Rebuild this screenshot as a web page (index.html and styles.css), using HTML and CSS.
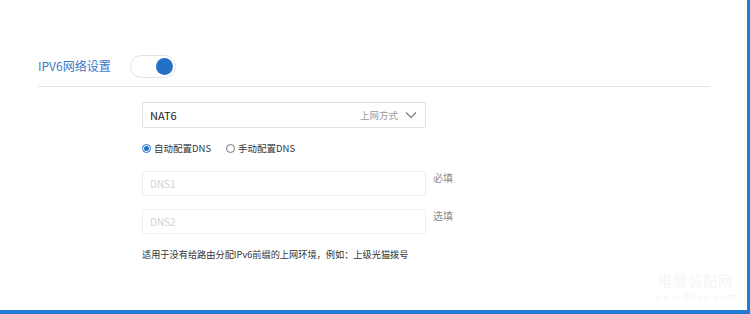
FILE: index.html
```html
<!DOCTYPE html>
<html lang="zh-CN">
<head>
    <meta charset="UTF-8">
    <title>IPV6网络设置</title>
    <link rel="stylesheet" href="styles.css">
</head>
<body>
<div class="frame">
    <div class="page">
        <div class="section">
            <span class="section__title">IPV6网络设置</span>
            <span class="switch switch_on"><span class="switch__knob"></span></span>
        </div>

        <div class="form">
            <div class="select">
                <span class="select__value">NAT6</span>
                <span class="select__label">上网方式</span>
                <svg class="select__arrow" width="12" height="8" viewBox="0 0 12 8">
                    <path d="M1 1.5 L6 6.5 L11 1.5" fill="none" stroke="#777" stroke-width="1.1"/>
                </svg>
            </div>

            <div class="radios">
                <label class="radio"><span class="radio__dot radio__dot_on"></span>自动配置DNS</label>
                <label class="radio"><span class="radio__dot"></span>手动配置DNS</label>
            </div>

            <div class="form__line form__line_first">
                <div class="form__input">DNS1</div>
                <span class="form__hint">必填</span>
            </div>
            <div class="form__line">
                <div class="form__input">DNS2</div>
                <span class="form__hint">选填</span>
            </div>

            <p class="form__note">适用于没有给路由分配IPv6前缀的上网环境，例如：上级光猫拨号</p>
        </div>

        <div class="watermark">
            <div class="watermark__cn">电脑装配网</div>
            <div class="watermark__en">www.dnzp.com</div>
        </div>
    </div>
</div>
</body>
</html>
```

FILE: styles.css
```css
* {
    box-sizing: border-box;
    font-family: "Noto Sans CJK SC", "Noto Sans", sans-serif;
}
html, body {
    margin: 0;
    padding: 0;
    background: #fff;
}
.frame {
    width: 750px;
    height: 314px;
    border-right: 3px solid #1f7ad8;
    border-bottom: 4px solid #1f7ad8;
    overflow: hidden;
}
.page {
    position: relative;
    height: 100%;
    padding-top: 54px;
}
.section {
    display: flex;
    align-items: center;
    margin: 0 37px 0 38px;
    padding-bottom: 8px;
    border-bottom: 1px solid #e4e4e4;
}
.section__title {
    width: 92px;
    color: #3a78c6;
    font-size: 12px;
    line-height: 24px;
}
.switch {
    display: inline-block;
    position: relative;
    width: 46px;
    height: 23px;
    border: 1px solid #e2e2e2;
    border-radius: 12px;
    background: #fff;
}
.switch__knob {
    position: absolute;
    top: 2px;
    right: 2px;
    width: 17px;
    height: 17px;
    border-radius: 50%;
    background: #2370c4;
}
.form {
    width: 330px;
    margin: 15px 0 0 142px;
}
.select {
    display: flex;
    align-items: center;
    width: 284px;
    height: 26px;
    padding: 0 7px;
    border: 1px solid #e2e2e2;
    border-radius: 2px;
}
.select__value {
    flex: 1;
    color: #222;
    font-size: 11px;
}
.select__label {
    color: #9a9a9a;
    font-size: 9.5px;
    margin-right: 7px;
}
.select__arrow {
    margin-right: 1px;
}
.radios {
    display: flex;
    align-items: center;
    margin-top: 14px;
    height: 12px;
    font-size: 9.5px;
    color: #333;
}
.radio {
    display: flex;
    align-items: center;
    margin-right: 15px;
}
.radio__dot {
    display: inline-block;
    position: relative;
    width: 9px;
    height: 9px;
    margin-right: 3px;
    border: 1px solid #777;
    border-radius: 50%;
    background: #fff;
}
.radio__dot_on {
    border-color: #1f6fd0;
}
.radio__dot_on::after {
    content: "";
    position: absolute;
    top: 1px;
    left: 1px;
    width: 5px;
    height: 5px;
    border-radius: 50%;
    background: #1f6fd0;
}
.form__line {
    display: flex;
    align-items: flex-start;
    margin-top: 13px;
}
.form__line_first {
    margin-top: 17px;
}
.form__input {
    width: 284px;
    height: 25px;
    padding: 0 7px;
    border: 1px solid #efefef;
    border-radius: 2px;
    color: #d2d2d2;
    font-size: 10px;
    line-height: 23px;
}
.form__hint {
    margin-left: 7px;
    color: #8a8a8a;
    font-size: 10px;
    line-height: 14px;
}
.form__note {
    margin: 13px 0 0;
    color: #333;
    font-size: 9.2px;
    white-space: nowrap;
}
.watermark {
    position: absolute;
    right: 10px;
    bottom: 7px;
    text-align: center;
    color: #f5f5f5;
}
.watermark__cn {
    font-size: 14px;
    letter-spacing: 1px;
    line-height: 20px;
}
.watermark__en {
    font-size: 9px;
    letter-spacing: 1.5px;
    line-height: 13px;
}
```
